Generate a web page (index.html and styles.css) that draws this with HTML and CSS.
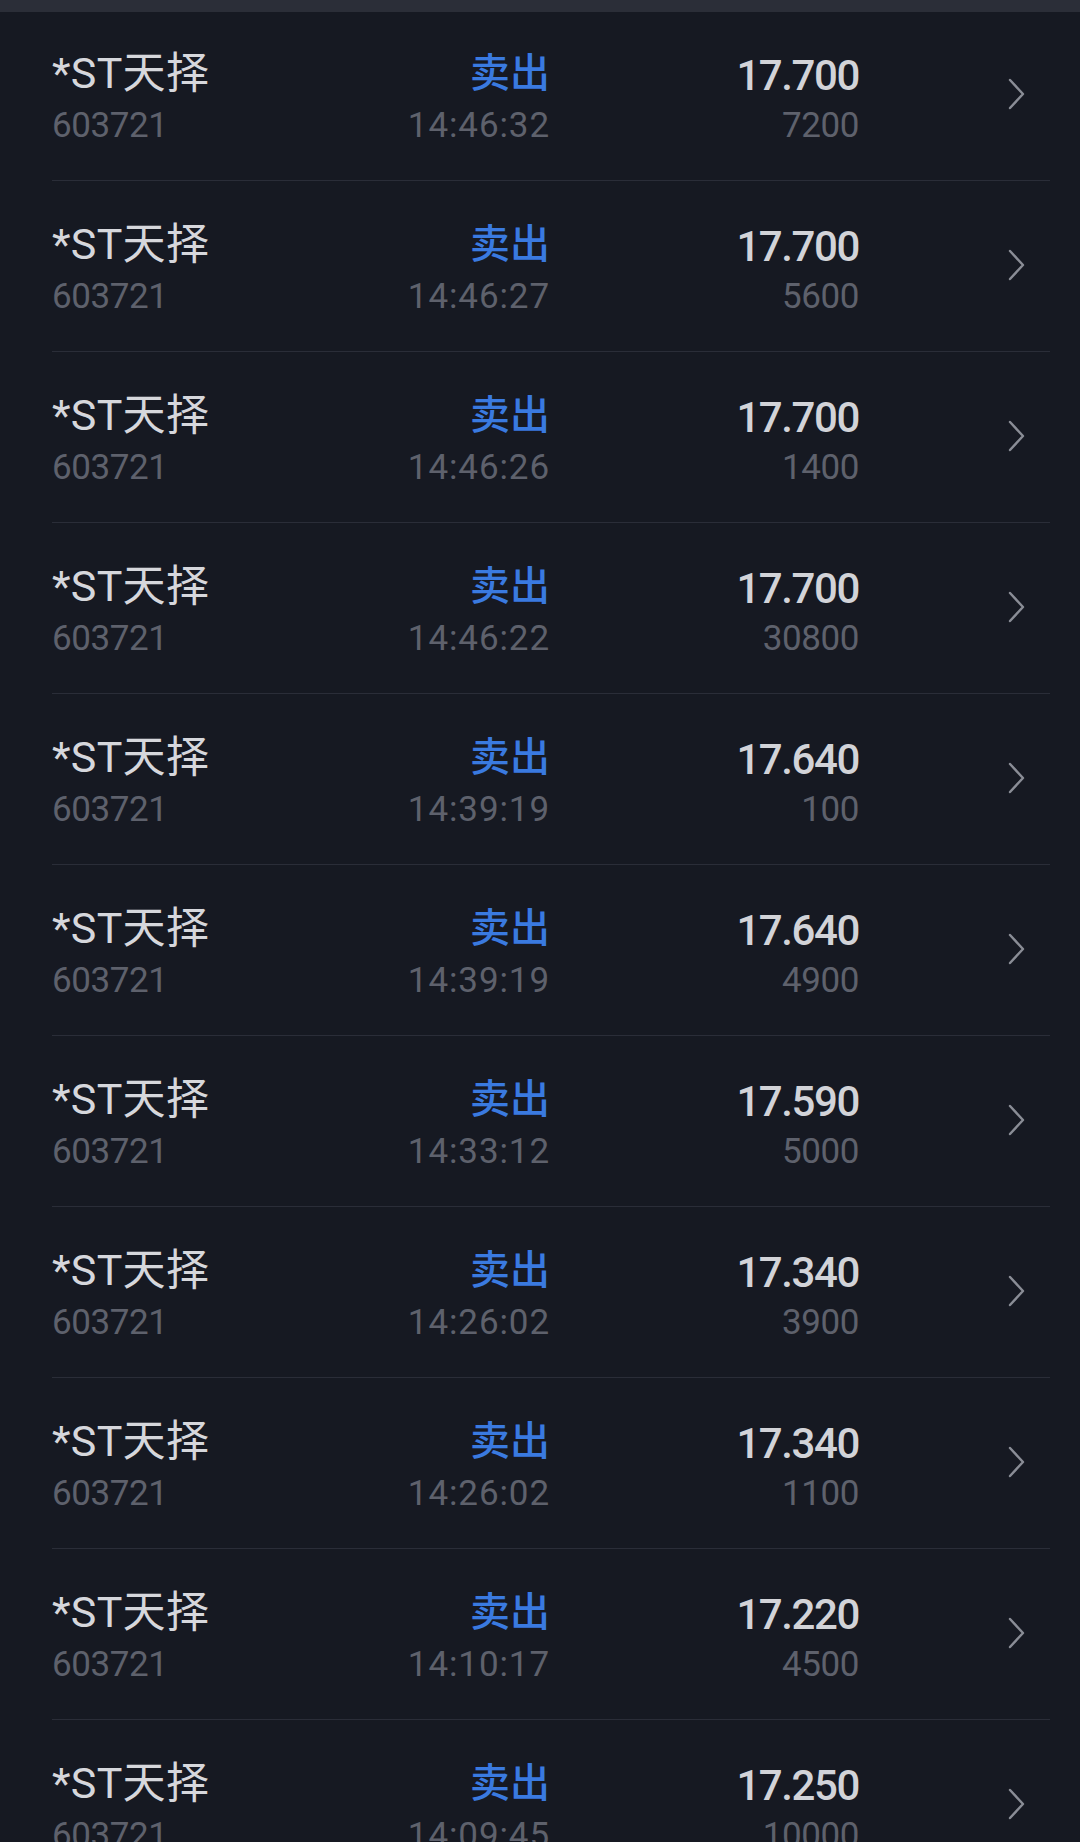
FILE: index.html
```html
<!DOCTYPE html>
<html lang="zh-CN">
<head>
    <meta charset="UTF-8">
    <meta name="viewport" content="width=device-width, initial-scale=1.0">
    <title>成交明细</title>
    <link rel="stylesheet" href="styles.css">
</head>
<body>
    <div class="topbar"></div>
    <div class="list" id="dealList"></div>

    <script>
        const deals = [
            ["14:46:32", "17.700", "7200"],
            ["14:46:27", "17.700", "5600"],
            ["14:46:26", "17.700", "1400"],
            ["14:46:22", "17.700", "30800"],
            ["14:39:19", "17.640", "100"],
            ["14:39:19", "17.640", "4900"],
            ["14:33:12", "17.590", "5000"],
            ["14:26:02", "17.340", "3900"],
            ["14:26:02", "17.340", "1100"],
            ["14:10:17", "17.220", "4500"],
            ["14:09:45", "17.250", "10000"]
        ];

        // Стрелка справа в каждой строке
        const chevron = '<svg class="chevron" width="18" height="32" viewBox="0 0 18 32"><path d="M2 2 L15 16 L2 30" fill="none" stroke="currentColor" stroke-width="2.4" stroke-linecap="round" stroke-linejoin="round"/></svg>';

        let html = "";
        deals.forEach(function(d) {
            html += `
                <div class="row">
                    <div class="cell">
                        <div class="main name">*ST天择</div>
                        <div class="sub">603721</div>
                    </div>
                    <div class="cell right">
                        <div class="main side">卖出</div>
                        <div class="sub time">${d[0]}</div>
                    </div>
                    <div class="cell right">
                        <div class="main price">${d[1]}</div>
                        <div class="sub">${d[2]}</div>
                    </div>
                    <div class="arrow">${chevron}</div>
                </div>`;
        });
        document.getElementById("dealList").innerHTML = html;
    </script>
</body>
</html>
```

FILE: styles.css
```css
body {
    margin: 0;
    padding: 0;
    background-color: #161922;
    font-family: Roboto, "Noto Sans CJK SC", sans-serif;
    height: 1842px;
    overflow: hidden;
}

.topbar {
    height: 12px;
    background-color: #2b2e38;
}

.list {
    margin-top: -2px;
}

.row {
    display: grid;
    grid-template-columns: 250px 248px 309px 1fr;
    margin: 0 30px 0 52px;
    padding-top: 35px;
    box-sizing: border-box;
    border-bottom: 1px solid #2a2d38;
    height: 171px;
}

.cell {
    display: flex;
    flex-direction: column;
}

.right {
    align-items: flex-end;
}

.main {
    height: 56px;
    line-height: 56px;
    font-size: 41px;
    color: #d6d7dc;
    white-space: nowrap;
}

.name {
    font-size: 43px;
    letter-spacing: 0.3px;
}

.side {
    font-size: 40px;
    color: #3a7ae0;
    font-weight: 500;
    padding-top: 2px;
    height: 54px;
    line-height: 54px;
}

.price {
    font-size: 42px;
    font-weight: 500;
    color: #d2d3d8;
    letter-spacing: -1.4px;
    padding-top: 6px;
    height: 50px;
    line-height: 50px;
}

.sub {
    height: 50px;
    line-height: 50px;
    font-size: 35px;
    color: #5e616c;
    letter-spacing: -0.4px;
    white-space: nowrap;
}

.time {
    letter-spacing: 0.9px;
}

.arrow {
    display: flex;
    justify-content: flex-end;
    padding-right: 24px;
    padding-top: 33px;
    color: #8a8d96;
}
```
